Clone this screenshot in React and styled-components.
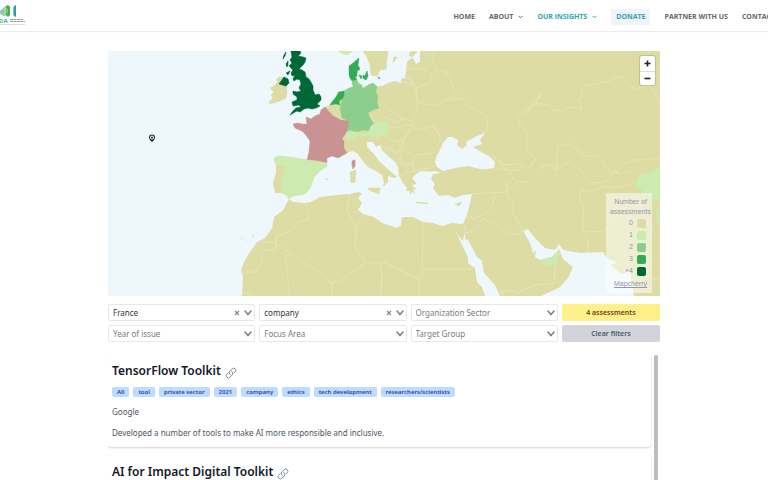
import React from "react";
import styled, { createGlobalStyle } from "styled-components";

const GlobalStyle = createGlobalStyle`
  *, *::before, *::after { box-sizing: border-box; }
  body { margin: 0; background: #fff; }
  button, select { font: inherit; }
`;

const Page = styled.div`
  display: flex;
  flex-direction: column;
  height: 100vh;
  overflow: hidden;
  font-family: "Noto Sans", "Open Sans", sans-serif;
  color: #111827;
`;

const Header = styled.header`
  flex: none;
  display: flex;
  align-items: center;
  justify-content: space-between;
  height: 31px;
  padding-top: 2px;
  background: #fff;
  box-shadow: 0 1px 1px rgba(0, 0, 0, 0.08);
`;

const LogoLink = styled.a`
  display: block;
  height: 24px;
  svg { display: block; }
`;

const Nav = styled.nav`
  display: flex;
  align-items: center;
  gap: 14px;
  margin-right: -18px;
  font: 700 7px/16px "Open Sans", sans-serif;
  white-space: nowrap;
`;

const NavLink = styled.a`
  display: flex;
  align-items: center;
  gap: 5px;
  padding: ${(p) => (p.$boxed ? "0 5px" : "0")};
  background: ${(p) => (p.$boxed ? "#f1f3f5" : "transparent")};
  color: ${(p) => (p.$accent ? "#2ea3b7" : "#666")};
  text-decoration: none;
`;

const Main = styled.main`
  flex: 1;
  min-height: 0;
  display: flex;
  flex-direction: column;
  width: 100%;
  max-width: 552px;
  margin: 20px auto 0;
`;

const MapFrame = styled.section`
  flex: none;
  position: relative;
  height: 245px;
  overflow: hidden;
  background: #eef7fb;
`;

const MapDrawing = styled.svg`
  display: block;
  width: 100%;
  height: 100%;
`;

const ZoomControl = styled.div`
  position: absolute;
  top: 5px;
  right: 5px;
  display: flex;
  flex-direction: column;
  width: 15px;
  border-radius: 2px;
  background: #fff;
  box-shadow: 0 0 0 1px rgba(0, 0, 0, 0.12);
`;

const ZoomButton = styled.button`
  display: flex;
  align-items: center;
  justify-content: center;
  height: 15px;
  padding: 0;
  border: 0;
  background: none;
  & + & { height: 14px; border-top: 1px solid #ddd; }
`;

const Legend = styled.div`
  position: absolute;
  right: 8px;
  bottom: 3px;
  display: flex;
  flex-direction: column;
  align-items: center;
  width: 46px;
  height: 100px;
  padding: 4px 0 0 3px;
  background: rgba(255, 255, 255, 0.5);
  color: #9297ab;
  font: 400 7px/10px "Liberation Sans", Arial, sans-serif;
  text-align: center;
`;

const LegendRow = styled.div`
  align-self: flex-end;
  display: flex;
  align-items: center;
  gap: 4px;
  height: 12px;
  padding-right: 6px;
`;

const Swatch = styled.span`
  width: 9px;
  height: 9px;
  border-radius: 2px;
  background: ${(p) => p.$color};
`;

const LegendLink = styled.a`
  margin-top: 2px;
  color: inherit;
`;

const Filters = styled.form`
  flex: none;
  display: grid;
  grid-template-columns: 3fr 3fr 3fr 2fr;
  grid-auto-rows: 17px;
  gap: 4px;
  margin-top: 8px;
`;

const Field = styled.div`
  display: flex;
  align-items: center;
  gap: 4px;
  min-width: 0;
  padding: 0 2px 0 4px;
  border: 1px solid #e8e8e8;
  border-radius: 2px;
`;

const FieldSelect = styled.select`
  appearance: none;
  flex: 1;
  min-width: 0;
  height: 15px;
  padding: 0;
  border: 0;
  background: none;
  color: ${(p) => (p.$filled ? "#333" : "#7c7c7c")};
  font-size: 8px;
  line-height: 15px;
`;

const ClearButton = styled.button`
  display: flex;
  padding: 0;
  border: 0;
  background: none;
`;

const ActionButton = styled.button`
  padding: 0;
  border: 0;
  border-radius: 2px;
  background: ${(p) => (p.$warm ? "#fef08a" : "#d1d5db")};
  color: ${(p) => (p.$warm ? "#713f12" : "#4b5563")};
  font-size: 7px;
  font-weight: 600;
  line-height: 17px;
`;

const Results = styled.section`
  flex: 1;
  min-height: 0;
  display: flex;
  gap: 3px;
  margin-top: 11px;
  overflow: hidden;
`;

const ResultList = styled.div`
  flex: 1;
  display: flex;
  flex-direction: column;
  gap: 7px;
`;

const ScrollThumb = styled.div`
  flex: none;
  width: 4px;
  margin: 2px 2px 0 0;
  border-radius: 2px 2px 0 0;
  background: #bdbdbd;
`;

const Card = styled.article`
  flex: none;
  min-height: 94px;
  padding: 8px 4px;
  border-radius: 3px;
  background: #fff;
  box-shadow: 0 1px 2px rgba(0, 0, 0, 0.18);
`;

const CardHeader = styled.div`
  display: flex;
  align-items: center;
  gap: 4px;
  a { display: flex; padding-top: 4px; }
`;

const Title = styled.h2`
  margin: 0;
  font-size: 12px;
  font-weight: 600;
  line-height: 20px;
`;

const Tags = styled.ul`
  display: flex;
  flex-wrap: wrap;
  gap: 4px;
  margin: 6px 0 0;
  padding: 0;
  list-style: none;
`;

const Tag = styled.li`
  padding: 0 5px;
  border-radius: 2px;
  background: #bfdbfe;
  color: #1e40af;
  font-size: 6px;
  font-weight: 600;
  line-height: 10px;
`;

const Text = styled.p`
  margin: 8px 0 0;
  color: #4b5563;
  font-size: 8px;
  line-height: 13px;
`;

const C = {
  land: "#dddca4",
  one: "#cdebaf",
  two: "#8bce8d",
  three: "#31ab56",
  four: "#006837",
  selected: "#c99393",
};

const LAND =
  "M660 51L420 51L420 62L416 64L413 58L410 59L407 62L406 70L405 78L401 79L401 83L395 81L388 83L382 86L377 86L373 83L368 85L362 88L360 83L357 80L357 74L360 69L358 65L359 58L353 63L349 66L349 75L352 81L353 87L349 88L344 91L337 92L336 97L332 102L330 105L325 107L321 110L320 114L315 116L311 119L308 118L306 117L307 124L302 124L298 123L293 124L295 128L302 131L306 135L310 141L309 152L307 160L297 158L280 156L275 157L274 160L276 165L276 172L273 183L275 193L282 193L286 195L289 199L293 196L300 195L305 194L310 188L312 183L314 177L320 171L327 166L327 158L332 156L338 158L347 153L352 151L357 153L362 160L368 167L376 171L382 175L384 182L383 187L388 182L388 176L394 178L397 177L389 170L380 162L373 153L367 147L367 142L373 142L376 147L380 145L382 150L388 156L395 162L398 167L399 176L403 183L407 188L406 191L410 191L410 195L412 192L415 194L413 189L417 190L412 185L417 184L412 178L417 173L423 174L430 171L433 174L431 179L435 184L433 188L439 196L448 195L455 198L463 195L472 194L470 203L467 215L463 224L452 223L442 226L433 223L423 222L413 217L402 217L401 225L397 228L391 226L382 223L374 217L363 214L358 210L362 203L358 198L362 194L359 192L350 194L337 195L320 197L311 202L305 203L293 202L289 199L283 210L274 217L272 228L265 238L257 242L250 252L245 260L241 270L243 277L242 296L660 296Z";

const SEAS = [
  "M453 137L458 140L457 145L462 149L467 145L466 142L475 137L485 133L480 140L482 144L473 147L483 153L490 157L495 162L494 168L487 169L480 169L468 166L455 168L443 171L437 167L435 162L437 155L439 152L443 143L448 137Z",
  "M418 172L424 171L430 172L436 171L441 173L434 174L428 175L420 175Z",
  "M455 230L459 237L463 241L465 232L465 239L468 240L477 257L482 261L484 273L495 285L500 296L485 296L482 287L477 282L475 268L468 263L468 257L462 245Z",
  "M523 231L528 229L535 238L545 248L555 250L559 244L563 250L580 253L603 252L607 258L617 263L610 265L622 274L630 270L634 296L541 296L560 287L568 278L573 267L563 259L560 252L559 249L552 257L540 260L535 257L536 250L533 253L530 243Z",
];

const ISLANDS = [
  ["M363 51L367 57L370 65L371 75L377 76L380 70L386 69L387 58L388 51Z", C.land],
  ["M279 77L284 78L280 84L286 85L287 92L286 98L280 101L270 104L269 102L273 98L271 95L274 92L270 88L275 85L278 82L276 80Z", C.land],
  ["M368 188L380 188L379 194L369 190Z", C.land],
  ["M350 172L356 170L355 182L351 183Z", C.land],
  ["M416 202L428 203L427 204L417 203Z", C.land],
  ["M455 204L462 202L459 206Z", C.land],
  ["M393 62L394 57L397 57L394 62Z", C.land],
  ["M409 55L411 51L417 52L412 57Z", C.land],
  ["M291 51L300 51L301 53L298 56L303 57L306 58L305 62L303 65L299 69L302 70L305 72L306 77L309 79L312 84L313 86L313 90L315 95L319 94L321 97L321 100L317 104L320 106L316 108L312 109L308 108L304 109L300 112L297 111L295 112L290 115L293 111L296 108L301 107L299 105L293 106L292 102L297 100L297 97L293 94L293 91L297 92L301 91L299 88L301 84L300 80L297 79L294 81L293 79L295 75L292 76L291 73L293 70L289 66L292 63L290 60L292 57Z", C.four],
  ["M284 77L288 79L289 83L286 86L279 84Z", C.four],
  ["M284 55L286 52L285 56L283 59ZM286 64L288 61L288 65L287 67ZM286 73L290 71L288 75Z", C.four],
  ["M338 51L353 51L347 55L343 54Z", C.one],
  ["M363 75L365 76L367 71L368 76L366 80L363 78ZM359 75L362 76L361 79Z", C.three],
  ["M378 77L380 78L379 79Z", C.three],
  ["M352 161L355 160L355 166L353 169L352 165Z", C.selected],
  ["M325 179L327 178L328 179L326 180ZM235 236L236 237ZM241 238L242 239L241 239ZM245 240L246 240L246 241ZM253 236L254 235L253 238Z", C.one],
];

const COUNTRIES = [
  ["M353 63L359 58L358 65L360 69L357 71L357 76L355 77L357 80L352 81L350 78L349 75L349 66Z", C.three],
  ["M352 81L357 80L358 84L362 85L362 88L366 87L368 85L373 83L377 87L376 92L378 97L377 102L379 108L373 110L368 113L370 118L374 124L370 127L369 131L363 130L357 132L350 130L347 131L349 121L342 118L340 108L342 100L344 91L349 88L353 87Z", C.two],
  ["M339 92L344 91L344 96L342 99L339 101L340 105L336 104L330 105L332 102L336 97Z", C.three],
  ["M325 107L321 110L320 114L315 116L311 119L306 117L307 124L302 124L298 123L293 124L295 128L302 131L306 135L310 141L309 152L307 160L317 161L327 163L327 158L332 156L338 158L347 153L344 148L344 141L342 139L347 131L349 121L341 120L333 116Z", C.selected],
  ["M307 160L297 158L280 156L275 157L274 160L276 165L286 166L284 173L281 183L282 193L286 195L289 199L293 196L305 194L310 188L312 183L314 177L320 171L327 166L327 163L317 161Z", C.one],
  ["M344 138L348 132L358 132L359 136L353 140L348 140Z", C.one],
  ["M359 135L368 132L373 124L380 122L387 122L388 127L387 133L378 138L368 136Z", C.one],
  ["M540 260L552 257L558 251L558 257L555 266L543 264Z", C.one],
  ["M660 167L650 172L640 174L635 185L642 190L643 195L652 200L660 201ZM657 208L660 211L660 225L657 220Z", C.one],
];

const BORDERS = [
  "M434 51L433 62L438 70L430 74L432 77L428 84L417 87L416 91M438 70L446 72L451 79L452 86L457 91L450 99L442 101L441 105L429 105L418 102L416 91L414 85L405 82L400 82M406 71L413 68L423 69L429 74M401 78L411 79L413 84",
  "M416 91L418 103L416 114L412 121L413 127L418 130L427 128L433 126L438 132L443 143M433 126L440 135L439 143M452 100L462 98L466 105L475 109L488 117L487 130L481 134M412 121L403 119L395 122L384 117L378 109M386 109L395 113L403 119M388 127L395 128L411 124M411 128L405 138L398 141L388 139L386 134M405 138L402 142L406 152L414 155L427 154L436 152M398 141L402 148L397 153L385 147L380 145M388 154L386 148M402 150L401 163L406 164L407 172M406 164L413 163L414 156M413 163L414 171L405 174L400 176M414 171L430 168L435 166",
  "M483 153L498 160L505 165L518 164L524 168M498 160L505 169L494 169M506 167L514 178L506 185L507 192L514 206L513 213L523 230M505 170L519 170M472 194L487 193L507 192M507 192L517 181L527 182M494 196L493 205L484 215L473 219L470 215M484 219L498 226L509 234L522 234L526 230M484 219L477 224L479 228L466 233M464 224L466 233M467 216L468 220",
  "M423 222L422 278L419 279L419 296M422 269L473 269M380 263L384 262L419 279M380 263L382 276L381 296M366 262L380 264M366 262L355 248L357 230L347 211L350 194M356 230L358 221L364 214M366 262L340 281L330 283L328 278L293 255L276 244L276 237L292 230L298 222L309 219L306 204M257 242L276 242M276 242L276 250L262 250L262 262L256 272L241 272M293 255L285 255L290 296M332 283L332 296M240 295L247 292L253 296",
  "M541 107L536 102L541 94L530 106L518 117L519 124L527 132L527 150L536 159L530 167M520 112L525 116L530 108L537 103L544 105L549 104L553 110L562 111L571 107L582 109L581 104L577 101L583 96L581 90L584 86L599 83L610 81L616 76L624 78L628 84L636 89L648 85L657 96L660 104",
  "M557 170L557 147L569 143L585 156L598 156L606 168L615 174L625 163L635 160L645 159L660 159M538 169L550 164L557 169L570 161L580 170L592 183L606 182L615 170L620 174L632 170M580 190L580 202L584 204L582 231L588 240L587 252M582 231L604 232L612 219L622 214L627 204L640 195M580 190L592 191L605 186L617 188L630 184L635 184",
  "M520 291L536 285L554 283L555 266M500 292L512 290L520 293M500 292L504 296M388 127L388 133M368 113L374 108M342 120L335 113L331 107M646 250L650 262L643 270L655 280L660 279M640 200L641 215L652 225L650 240L646 250",
];

const LEGEND = [["0", C.land], ["1", C.one], ["2", C.two], ["3", C.three], ["+4", C.four]];

const FILTERS = [
  { label: "Country", value: "France", filled: true },
  { label: "Organization type", value: "company", filled: true },
  { label: "Organization sector", value: "Organization Sector" },
  { label: "Year of issue", value: "Year of issue" },
  { label: "Focus area", value: "Focus Area" },
  { label: "Target group", value: "Target Group" },
];

const RESULTS = [
  {
    title: "TensorFlow Toolkit",
    tags: ["All", "tool", "private sector", "2021", "company", "ethics", "tech development", "researchers/scientists"],
    owner: "Google",
    text: "Developed a number of tools to make AI more responsible and inclusive.",
  },
  { title: "AI for Impact Digital Toolkit" },
];

function Logo() {
  return (
    <svg width="26" height="24" viewBox="0 0 26 24" aria-hidden="true">
      <path d="M0 6L4 2L6 1V11H3L0 9Z" fill="#a5d6a0" />
      <path d="M0 6L3 4L5 7L2 9Z" fill="#7fc4cf" />
      <path d="M6 1L8 0L10 2V10L8 12L6 10Z" fill="#43ab6b" />
      <path d="M6 2L8 4V9L6 7Z" fill="#8dc63f" />
      <path d="M13 4L14 1L16 0V12L14 11L13 8Z" fill="#2a9fa8" />
      <path d="M13 4L14 1V11L13 8Z" fill="#8ccf8e" />
      <text x="-1" y="18" fontFamily="Open Sans, sans-serif" fontSize="6" fontWeight="700">
        <tspan fill="#67bd5b">D</tspan><tspan fill="#2f9fb0">A</tspan>
      </text>
      <path d="M10 14.5H23M10 16.5H25" stroke="#9a9a9a" strokeWidth="1" strokeDasharray="3 .5" />
      <path d="M0 19.5H25" stroke="#ddd" strokeWidth="1" />
    </svg>
  );
}

function Caret() {
  return (
    <svg width="5" height="4" viewBox="0 0 5 4" aria-hidden="true">
      <path d="M.5 .8L2.5 2.8L4.5 .8" fill="none" stroke="currentColor" />
    </svg>
  );
}

function Chevron() {
  return (
    <svg width="8" height="6" viewBox="0 0 8 6" aria-hidden="true">
      <path d="M1 1L4 4.5L7 1" fill="none" stroke="#808080" strokeWidth="1.5" strokeLinecap="round" />
    </svg>
  );
}

function LinkIcon() {
  return (
    <svg width="12" height="12" viewBox="0 0 24 24" fill="none" stroke="#6b7280" strokeWidth="1.6" strokeLinecap="round" strokeLinejoin="round" aria-hidden="true">
      <path d="M13.19 8.688a4.5 4.5 0 0 1 1.242 7.244l-4.5 4.5a4.5 4.5 0 0 1-6.364-6.364l1.757-1.757m13.35-.622 1.757-1.757a4.5 4.5 0 0 0-6.364-6.364l-4.5 4.5a4.5 4.5 0 0 0 1.242 7.244" />
    </svg>
  );
}

function AssessmentMap() {
  return (
    <MapFrame aria-label="Assessments by country">
      <MapDrawing viewBox="108 51 552 245" preserveAspectRatio="xMidYMid slice" aria-hidden="true">
        <path d={LAND} fill={C.land} />
        {SEAS.map((d) => <path key={d} d={d} fill="#eef7fb" />)}
        {ISLANDS.map(([d, fill]) => <path key={d} d={d} fill={fill} stroke={fill} strokeWidth=".6" strokeLinejoin="round" />)}
        <g fill="none" stroke="#ebe7c6" strokeWidth=".7" strokeLinejoin="round">
          {BORDERS.map((d) => <path key={d} d={d} />)}
        </g>
        {COUNTRIES.map(([d, fill]) => <path key={d} d={d} fill={fill} stroke={fill} strokeWidth=".4" strokeLinejoin="round" />)}
        <path d="M152 142C150 140 149 139 149 137.5A3 3 0 0 1 155 137.5C155 139 154 140 152 142Z" fill="#222" />
        <circle cx="152" cy="137.5" r="2" fill="#fff" />
        <circle cx="152" cy="137.5" r="1" fill="#222" />
      </MapDrawing>
      <ZoomControl>
        <ZoomButton type="button" aria-label="Zoom in">
          <svg width="7" height="7" viewBox="0 0 7 7"><path d="M3.5 .5V6.5M.5 3.5H6.5" stroke="#222" strokeWidth="1.6" /></svg>
        </ZoomButton>
        <ZoomButton type="button" aria-label="Zoom out">
          <svg width="7" height="7" viewBox="0 0 7 7"><path d="M.5 3.5H6.5" stroke="#222" strokeWidth="1.6" /></svg>
        </ZoomButton>
      </ZoomControl>
      <Legend>
        <span>Number of</span>
        <span>assessments</span>
        {LEGEND.map(([label, color]) => (
          <LegendRow key={label}>{label}<Swatch $color={color} /></LegendRow>
        ))}
        <LegendLink href="#mapcherry">Mapcherry</LegendLink>
      </Legend>
    </MapFrame>
  );
}

function Filter({ label, value, filled }) {
  return (
    <Field>
      <FieldSelect aria-label={label} $filled={filled}>
        <option>{value}</option>
      </FieldSelect>
      {filled && (
        <ClearButton type="button" aria-label={`Clear ${label}`}>
          <svg width="6" height="6" viewBox="0 0 6 6"><path d="M1 1L5 5M5 1L1 5" stroke="#888" strokeWidth="1.2" /></svg>
        </ClearButton>
      )}
      <Chevron />
    </Field>
  );
}

export default function App() {
  return (
    <Page>
      <GlobalStyle />
      <Header>
        <LogoLink href="#home" aria-label="Home"><Logo /></LogoLink>
        <Nav>
          <NavLink href="#home">HOME</NavLink>
          <NavLink href="#about">ABOUT <Caret /></NavLink>
          <NavLink href="#insights" $accent>OUR INSIGHTS <Caret /></NavLink>
          <NavLink href="#donate" $accent $boxed>DONATE</NavLink>
          <NavLink href="#partner">PARTNER WITH US</NavLink>
          <NavLink href="#contact">CONTACT US</NavLink>
        </Nav>
      </Header>
      <Main>
        <AssessmentMap />
        <Filters>
          {FILTERS.slice(0, 3).map((f) => <Filter key={f.label} {...f} />)}
          <ActionButton type="button" $warm>4 assessments</ActionButton>
          {FILTERS.slice(3).map((f) => <Filter key={f.label} {...f} />)}
          <ActionButton type="reset">Clear filters</ActionButton>
        </Filters>
        <Results>
          <ResultList>
            {RESULTS.map((r) => (
              <Card key={r.title}>
                <CardHeader>
                  <Title>{r.title}</Title>
                  <a href="#resource" aria-label={`Open ${r.title}`}><LinkIcon /></a>
                </CardHeader>
                {r.tags && <Tags>{r.tags.map((t) => <Tag key={t}>{t}</Tag>)}</Tags>}
                {r.owner && <Text>{r.owner}</Text>}
                {r.text && <Text>{r.text}</Text>}
              </Card>
            ))}
          </ResultList>
          <ScrollThumb />
        </Results>
      </Main>
    </Page>
  );
}
